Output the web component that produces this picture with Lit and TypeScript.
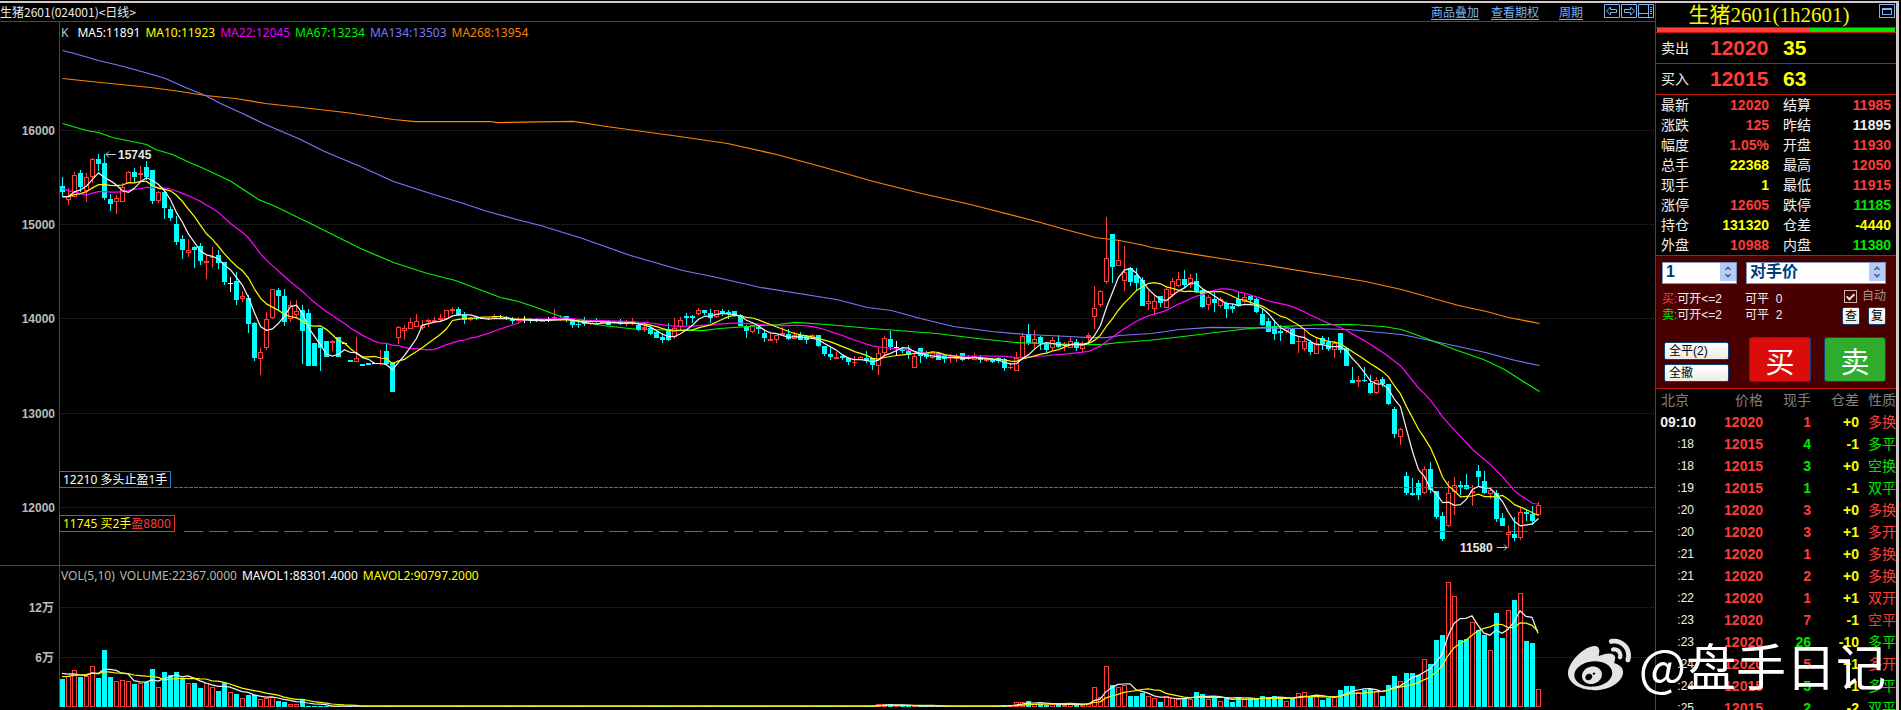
import { LitElement, html, svg, css } from "lit";
import { customElement } from "lit/decorators.js";
import { classMap } from "lit/directives/class-map.js";

// One candle per entry: direction (c = down, r = up, w = flat), high, body top, body bottom, low.
// Levels are canvas rows of the daily chart.
const CANDLES = `
c177,186,192,197 r188,196,200,205 r172,175,197,197 c170,173,187,192 r173,177,191,202 r158,159,177,183
c154,159,164,171 c154,163,198,200 c194,199,204,211 r195,198,202,214 r183,187,202,202 r171,172,183,183
c168,172,177,183 r166,173,175,182 c161,167,177,180 c170,170,201,204 r191,192,201,203 c191,192,208,219
c206,209,218,221 c216,224,242,245 c235,239,250,259 r239,250,253,257 c246,247,250,268 c243,246,261,265
r255,261,263,279 r247,257,258,268 c250,255,263,269 c262,262,282,285 w277,283,284,292 c272,281,300,305
r291,296,299,302 c295,298,324,333 c322,323,358,361 r348,352,359,375 r312,319,348,350 r289,289,318,319
c288,290,296,310 c289,296,322,326 r301,305,319,322 r300,311,315,317 c305,310,331,364 c309,313,366,366
c343,343,366,366 c328,328,348,371 c341,341,357,357 r340,341,343,351 c337,337,357,357 w343,343,343,343
c360,360,362,362 r337,358,362,362 c364,364,366,366 c363,363,365,365 w363,363,363,363 r350,363,364,365
c343,351,364,364 c362,362,392,392 r326,327,338,344 r325,328,331,340 r318,322,329,329 r314,321,327,327
r320,325,328,330 r319,320,322,327 r317,320,322,323 r314,318,320,321 r310,310,319,320 r307,309,311,314
c307,309,315,316 c312,315,320,324 r317,318,320,321 c317,318,319,320 w318,318,319,319 r317,318,319,320
r314,317,319,319 w315,318,318,319 c316,317,319,320 c317,319,321,324 r317,320,321,322 w316,319,319,323
c318,319,320,323 c318,319,321,322 r319,320,322,322 w317,319,320,322 r309,317,319,320 r315,318,319,321
c316,316,319,322 c319,319,325,328 c320,324,325,328 c317,320,324,326 r320,321,324,325 c318,320,322,323
r320,321,323,324 c320,321,325,325 r321,321,323,324 c319,321,324,325 r320,321,323,326 r318,321,323,325
c322,325,330,331 r325,327,329,332 c325,328,334,335 c330,332,338,338 c333,337,340,343 c323,329,340,341
r318,328,337,339 r317,320,327,331 c313,316,318,325 c315,316,318,323 r308,310,314,315 c310,310,313,315
c309,313,318,323 r310,310,317,318 c309,311,313,316 c310,312,314,319 c311,311,315,317 c314,315,326,326
c325,326,331,338 r325,325,332,333 c325,327,329,334 c329,333,338,342 r333,339,341,341 r335,335,340,343
r327,333,335,336 c329,334,339,340 r332,335,339,339 c332,335,340,340 c335,336,340,344 r334,335,338,339
c335,335,346,347 c346,346,354,356 c348,354,357,360 r352,357,359,359 c354,356,358,360 c357,358,362,365
r356,362,363,366 r356,357,360,360 c351,358,361,363 c358,358,365,370 r347,353,366,375 r336,338,353,357
c331,339,347,350 w341,347,348,355 c347,349,351,353 c345,351,355,359 r352,356,368,368 c348,348,356,363
c351,353,357,359 r351,353,358,359 c353,353,360,360 c354,355,359,363 r354,356,358,363 r354,356,359,362
c353,353,360,361 r355,357,359,360 r353,356,360,360 c355,357,360,363 r358,359,361,362 c358,360,362,363
c357,358,361,363 c358,359,368,371 r363,367,368,369 r352,358,371,371 r333,336,358,358 c324,334,343,345
r330,339,343,349 c336,337,343,350 c343,343,350,353 r337,340,348,351 c335,342,347,348 r342,344,345,351
r337,341,348,348 c339,342,348,351 r341,343,349,352 r333,335,337,343 r286,308,317,329 r290,291,305,307
r217,258,282,284 c234,234,267,283 r240,260,266,266 r246,272,281,291 c267,268,282,286 c268,275,283,290
c277,280,306,306 r291,301,304,310 r295,301,309,315 c296,296,303,307 r286,289,308,308 r278,281,295,297
r272,279,286,287 c270,279,285,288 r274,278,285,288 c273,281,292,293 c289,290,307,308 r295,297,305,310
c293,299,303,312 r297,299,306,308 c302,303,309,318 c304,306,309,313 c292,299,306,307 r294,297,302,303
c295,296,300,305 c298,299,312,313 c309,314,325,326 c318,321,332,332 c320,326,334,340 c325,331,333,341
r326,327,331,333 c328,329,344,344 r336,341,342,353 r330,341,349,351 c340,342,352,355 r337,343,354,354
c336,338,344,350 c337,342,349,351 r341,343,350,358 c333,333,350,353 c347,348,366,366 c367,380,383,383
r376,380,382,387 c367,380,381,382 c375,383,393,394 r377,380,393,394 c377,379,384,387 c384,384,404,405
c407,409,434,438 r428,429,437,445 c472,476,493,495 c478,493,495,496 c480,483,495,500 r466,469,493,494
c462,469,490,493 c491,491,517,519 c512,516,539,541 r481,493,526,527 r477,485,492,515 c481,485,487,495
c474,485,489,490 r485,491,493,506 c465,471,477,486 c471,481,493,494 r487,490,494,499 c490,493,519,522
c513,518,526,526 r525,532,535,548 c517,534,538,541 r507,512,538,540 c509,512,514,521 c506,514,521,525
r502,505,515,515`
  .trim()
  .split(/\s+/)
  .map((s) => {
    const [high, top, bottom, low] = s.slice(1).split(",").map(Number);
    return { kind: s[0], high, top, bottom, low, close: s[0] === "c" ? bottom : top };
  });

// Volume per candle, 50 units to 60,000 lots.
const VOLUMES: number[] = [
  28, 31, 37, 30, 31, 41, 29, 57, 30, 26, 27, 26, 23, 24, 25, 38, 20, 35, 32, 35, 29, 24, 24, 19, 24, 20, 16, 24, 15,
  13, 9, 12, 12, 8, 9, 10, 6, 5, 3, 3, 8,
  ...new Array(95).fill(1),
  3, 3, 3, 1, 1, 1, 1, 1, 1, 1, 1, 1, 1, 1, 1, 1, 1, 1, 1, 1, 1, 2, 1,
  5, 5, 6, 3, 3, 2, 3, 3, 2, 3, 3, 2, 4, 20, 10, 41, 22, 20, 22, 11, 11, 14, 11, 9, 5, 11, 9, 8, 9, 8, 15, 13,
  8, 10, 6, 9, 5, 10, 8, 8, 8, 11, 10, 11, 9, 6, 9, 14, 15, 10, 11, 7, 9, 11, 17, 21, 21, 15, 17, 18, 16, 11, 22, 31,
  26, 34, 34, 32, 48, 43, 67, 72, 125, 111, 67, 68, 85, 77, 72, 57, 94, 69, 97, 107, 114, 66, 64, 18,
];

// Closes and volumes of the sessions before the first visible one.
const PRIOR_CLOSES = [150, 150, 150, 150, ...new Array(17).fill(197)];
const PRIOR_VOLUMES = [27, 27, 27, 27, 27, 35, 35, 35, 35];

const MA67 =
  "62,123 86,130 98,132 112,137 146,144 155,149 172,154 189,162 201,167 229,180 258,199 275,206 312,224 360,248 393,262 427,273 455,280 500,297 518,301 536,307 560,316 574,320 602,325 638,329 702,330 719,328 778,324 795,322 826,324 871,328 936,333 977,338 1015,342 1077,344 1101,344 1119,342 1147,340 1165,338 1183,336 1215,332 1240,329 1261,327 1322,324 1351,324 1383,326 1401,329 1426,338 1454,349 1483,359 1504,369 1526,383 1539,391";
const MA134 =
  "62,50 74,53 98,60 123,66 148,73 165,78 185,87 205,95 220,103 242,113 265,124 300,139 324,151 360,166 393,181 430,193 460,202 487,211 520,220 540,225 582,238 630,255 682,270 712,276 760,287 836,299 867,307 891,310 920,318 953,326 991,331 1026,334 1069,336 1088,337 1106,337 1119,335 1151,333 1179,329 1211,327 1311,328 1347,329 1401,334 1444,343 1485,352 1515,360 1539,365";
const MA268 =
  "62,78 100,82 150,87 180,91 205,95 235,98 265,103 310,108 345,112 393,119 415,121 490,121 497,122 573,121 606,126 679,136 727,143 776,154 824,167 873,181 921,193 970,204 1040,222 1061,228 1095,237 1119,240 1144,245 1151,247 1233,260 1261,264 1329,275 1365,281 1401,289 1426,296 1458,305 1486,311 1508,317 1539,323";

const PANE_TOP = 22;
const VOLUME_BASE = 141;
const xOf = (i: number) => 62 + 6 * i;

function movingAverage(values: number[], prior: number[], span: number): number[] {
  const all = [...prior, ...values];
  return values.map((_, i) => {
    const end = prior.length + i + 1;
    const part = all.slice(Math.max(0, end - span), end);
    return part.reduce((a, b) => a + b, 0) / part.length;
  });
}

const closes = CANDLES.map((c) => c.close);
const toPoints = (ys: number[]) => ys.map((y, i) => `${xOf(i)},${y.toFixed(1)}`).join(" ");

@customElement("price-chart")
class PriceChart extends LitElement {
  static styles = css`
    :host { display: block; position: relative; height: 543px; overflow: hidden; border-bottom: 1px solid #c01808; }
    svg { display: block; width: 100%; height: 100%; }
    .sharp { shape-rendering: crispEdges; }
    .axis { stroke: #c01808; }
    .grid { stroke: #a00000; stroke-dasharray: 1 1; }
    .stop { stroke: #1482c0; stroke-dasharray: 4 1; }
    .entry { stroke: #f03018; stroke-dasharray: 19 6; }
    .tick { font: bold 12px "Liberation Sans", Arial, sans-serif; fill: #b8bcbc; text-anchor: end; }
    .mark { font: bold 12px "Liberation Sans", Arial, sans-serif; fill: #e8e8e8; }
    .arrow { stroke: #c8c8c8; fill: none; }
    .c { fill: #00ffff; } .r { fill: #ff3c38; } .w { fill: #ffffff; } .hole { fill: #000; }
    .line { fill: none; stroke-width: 1.25; }
    .ma5 { stroke: #f0f0f0; color: #fff; } .ma10 { stroke: #f8f800; color: #ffff00; }
    .ma22 { stroke: #ff00ff; color: #f000f0; } .ma67 { stroke: #00f400; color: #00f000; }
    .ma134 { stroke: #7878fc; color: #7878f8; } .ma268 { stroke: #ff8400; color: #f88000; }
    .legend, .order { font: 12px/15px "Noto Sans", "Noto Sans CJK SC", sans-serif; white-space: pre; }
    .legend { position: absolute; left: 61px; top: 3px; display: flex; gap: 5px; color: #c8c8c8; }
    .legend .k { margin-right: 4px; }
    .legend span { stroke: none; }
    .order { position: absolute; left: 59px; padding: 0 3px; background: #000; border: 1px solid; }
    .order span { color: #fff; }
    .stop-tag { top: 449px; border-color: #1482c0; }
    .entry-tag { top: 493px; border-color: #f03018; }
    .order .y { color: #ffff00; } .order .p { color: #ff3c38; }
  `;

  private candle(c: (typeof CANDLES)[number], i: number) {
    const x = xOf(i);
    const top = c.top - PANE_TOP;
    const h = Math.max(1, c.bottom - c.top);
    const hollow = c.kind === "r" && h > 2;
    return svg`<g class=${c.kind}>
      <rect x=${x} y=${c.high - PANE_TOP} width="1" height=${Math.max(1, c.low - c.high)}></rect>
      <rect x=${x - 2} y=${top} width="5" height=${h}></rect>
      ${hollow ? svg`<rect class="hole" x=${x - 1} y=${top + 1} width="3" height=${h - 2}></rect>` : null}
    </g>`;
  }

  render() {
    const levels: [number, number][] = [[16000, 108], [15000, 202], [14000, 296], [13000, 391], [12000, 485]];
    return html`
      <svg role="img" aria-label="生猪2601 日线">
        <g class="sharp">
          ${levels.map(([, y]) => svg`<line class="grid" x1="61" x2="100%" y1=${y + 0.5} y2=${y + 0.5}></line>`)}
          <line class="axis" x1="59.5" x2="59.5" y1="0" y2="100%"></line>
        </g>
        ${levels.map(([v, y]) => svg`<text class="tick" x="55" y=${y + 5}>${v}</text>`)}
        <g class="sharp">
          ${CANDLES.map((c, i) => this.candle(c, i))}
          <line class="stop" x1="174" x2="100%" y1="465.5" y2="465.5"></line>
          <line class="entry" x1="184" x2="100%" y1="509.5" y2="509.5"></line>
        </g>
        <g transform="translate(0.5,-21.5)">
          <polyline class="line ma268" points=${MA268}></polyline>
          <polyline class="line ma134" points=${MA134}></polyline>
          <polyline class="line ma67" points=${MA67}></polyline>
          <polyline class="line ma22" points=${toPoints(movingAverage(closes, PRIOR_CLOSES, 22))}></polyline>
          <polyline class="line ma10" points=${toPoints(movingAverage(closes, PRIOR_CLOSES, 10))}></polyline>
          <polyline class="line ma5" points=${toPoints(movingAverage(closes, PRIOR_CLOSES, 5))}></polyline>
        </g>
        <path class="arrow" d="M116 132.5H106M109 129.5L106 132.5L109 135.5"></path>
        <text class="mark" x="118" y="137">15745</text>
        <text class="mark" x="1460" y="530">11580</text>
        <path class="arrow" d="M1497 525.5H1507M1504 522.5L1507 525.5L1504 528.5"></path>
      </svg>
      <div class="legend">
        <span class="k">K</span><span class="ma5">MA5:11891</span><span class="ma10">MA10:11923</span
        ><span class="ma22">MA22:12045</span><span class="ma67">MA67:13234</span
        ><span class="ma134">MA134:13503</span><span class="ma268">MA268:13954</span>
      </div>
      <div class="order stop-tag"><span>12210 多头止盈1手</span></div>
      <div class="order entry-tag"><span class="y">11745 买2手</span><span class="p">盈8800</span></div>
    `;
  }
}

@customElement("volume-chart")
class VolumeChart extends LitElement {
  static styles = css`
    :host { display: block; position: relative; height: 141px; overflow: hidden; }
    svg { display: block; width: 100%; height: 100%; }
    .sharp { shape-rendering: crispEdges; }
    .axis { stroke: #c01808; }
    .grid { stroke: #a00000; stroke-dasharray: 1 1; }
    .tick { font: bold 12px "Liberation Sans", "Noto Sans CJK SC", sans-serif; fill: #b8bcbc; text-anchor: end; }
    .c { fill: #00ffff; } .r { fill: #ff3c38; } .hole { fill: #000; }
    .line { fill: none; stroke-width: 1.25; }
    .m5 { stroke: #f0f0f0; color: #fff; } .m10 { stroke: #f8f800; color: #ffff00; }
    .legend {
      position: absolute; left: 61px; top: 2px; display: flex; gap: 5px; color: #b8b8b8; white-space: pre;
      font: 12px/15px "Noto Sans", sans-serif;
    }
  `;

  private bar(h: number, i: number) {
    const x = xOf(i) - 2;
    const up = CANDLES[i].kind !== "c";
    const y = VOLUME_BASE - h;
    return svg`<g class=${up ? "r" : "c"}>
      <rect x=${x} y=${y} width="5" height=${h}></rect>
      ${up && h > 2 ? svg`<rect class="hole" x=${x + 1} y=${y + 1} width="3" height=${h - 2}></rect>` : null}
    </g>`;
  }

  render() {
    const rows: [string, number][] = [["12万", 41], ["6万", 91]];
    const line = (prior: number[], span: number) =>
      toPoints(movingAverage(VOLUMES, prior, span).map((v) => VOLUME_BASE - v));
    return html`
      <svg role="img" aria-label="成交量">
        <g class="sharp">
          ${rows.map(([, y]) => svg`<line class="grid" x1="61" x2="100%" y1=${y + 0.5} y2=${y + 0.5}></line>`)}
          <line class="axis" x1="59.5" x2="59.5" y1="0" y2="100%"></line>
          ${VOLUMES.map((h, i) => this.bar(h, i))}
        </g>
        ${rows.map(([t, y]) => svg`<text class="tick" x="54" y=${y + 5}>${t}</text>`)}
        <polyline class="line m5" points=${line(PRIOR_VOLUMES, 5)}></polyline>
        <polyline class="line m10" points=${line(PRIOR_VOLUMES, 10)}></polyline>
      </svg>
      <div class="legend">
        <span>VOL(5,10)</span><span>VOLUME:22367.0000</span><span class="m5">MAVOL1:88301.4000</span
        ><span class="m10">MAVOL2:90797.2000</span>
      </div>
    `;
  }
}

type Tone = "red" | "green" | "yellow" | "white";

const QUOTES: [string, string, Tone, string, string, Tone][] = [
  ["最新", "12020", "red", "结算", "11985", "red"],
  ["涨跌", "125", "red", "昨结", "11895", "white"],
  ["幅度", "1.05%", "red", "开盘", "11930", "red"],
  ["总手", "22368", "yellow", "最高", "12050", "red"],
  ["现手", "1", "yellow", "最低", "11915", "red"],
  ["涨停", "12605", "red", "跌停", "11185", "green"],
  ["持仓", "131320", "yellow", "仓差", "-4440", "yellow"],
  ["外盘", "10988", "red", "内盘", "11380", "green"],
];

const TICKS: [string, string, string, string, string, Tone][] = [
  ["09:10", "12020", "1", "+0", "多换", "red"],
  [":18", "12015", "4", "-1", "多平", "green"],
  [":18", "12015", "3", "+0", "空换", "green"],
  [":19", "12015", "1", "-1", "双平", "green"],
  [":20", "12020", "3", "+0", "多换", "red"],
  [":20", "12020", "3", "+1", "多开", "red"],
  [":21", "12020", "1", "+0", "多换", "red"],
  [":21", "12020", "2", "+0", "多换", "red"],
  [":22", "12020", "1", "+1", "双开", "red"],
  [":23", "12020", "7", "-1", "空平", "red"],
  [":23", "12020", "26", "-10", "多平", "green"],
  [":24", "12020", "5", "+1", "多开", "red"],
  [":24", "12015", "5", "-1", "多平", "green"],
  [":25", "12015", "2", "-2", "双平", "green"],
];

const arrows = html`<svg class="arrows" viewBox="0 0 16 18" aria-hidden="true">
  <path d="M8 3L11.500 7H9.500L8 5.500L6.500 7H4.500ZM8 15L4.500 11H6.500L8 12.500L9.500 11H11.500Z"></path>
</svg>`;

@customElement("quote-panel")
class QuotePanel extends LitElement {
  static styles = css`
    :host { display: block; color: #f0f0f0; font: 14px/20px "Liberation Sans", "Noto Sans CJK SC", sans-serif; }
    button, input, select { font: inherit; margin: 0; box-sizing: border-box; border-radius: 0; }
    .red { color: #ff3c38; } .green { color: #00e800; } .yellow { color: #ffff00; } .white { color: #f0f0f0; }
    .title { display: flex; height: 24px; border-bottom: 1px solid #c01808; }
    .title h1 { flex: 1; margin: 0; padding-left: 4px; text-align: center; color: #f8f800; font: 21px/24px "Liberation Serif", "Noto Sans CJK SC", serif; }
    .icon { width: 16px; height: 14px; margin: 1px; padding: 0; border: 1px solid #78b4f4; background: none; display: grid; place-items: center; }
    .icon i { width: 8px; height: 4px; border: 1px solid #78b4f4; border-top-width: 2px; }
    .ratio { display: flex; height: 4px; padding: 0 1px; border-bottom: 1px solid #c01808; }
    .ratio .bid { flex: 9; background: #ff3c38; } .ratio .ask { flex: 5; background: #00e800; }
    .level { display: grid; grid-template-columns: 49px 73px 1fr; align-items: center; height: 30px; padding-left: 5px; border-bottom: 1px solid #c01808; }
    .level b { font-size: 21px; }
    .quotes { border-collapse: collapse; width: 100%; table-layout: fixed; }
    th, td { padding: 0; font-weight: normal; text-align: right; overflow: hidden; white-space: nowrap; }
    .quotes th { text-align: left; padding-left: 5px; }
    .quotes tr { height: 20px; }
    .quotes td { font-weight: bold; }
    .quotes td:last-child { padding-right: 5px; } .quotes th:nth-child(3) { padding-left: 14px; }
    .trade { background: #480000; border: solid #c01808; border-width: 1px 0; padding: 6px 10px 6px 6px; font-size: 12px; line-height: 16px; }
    .fields { display: grid; grid-template-columns: 75px 140px; justify-content: space-between; }
    .field { position: relative; display: block; height: 20px; border: 1px solid #7898c0; background: #fff; }
    .field input, .field select { display: block; width: 100%; height: 18px; padding: 0 3px; border: 0; outline: 0; background: none; appearance: none; color: #003c78; font: bold 16px/18px "Liberation Sans", "Noto Sans CJK SC", sans-serif; }
    .arrows { position: absolute; top: 0; right: 0; width: 16px; height: 18px; background: #b4ccf8; fill: #506078; pointer-events: none; }
    .options { display: grid; grid-template-columns: 83px 1fr auto; margin-top: 5px; }
    .options .sum { padding-top: 2px; white-space: pre; }
    .side { display: flex; flex-direction: column; align-items: flex-end; gap: 4px; }
    .auto { display: flex; align-items: center; gap: 5px; height: 14px; color: #a89888; }
    .auto input { appearance: none; width: 13px; height: 13px; border: 1px solid #c8b8a8; display: grid; place-items: center; }
    .auto input:checked::after { content: ""; width: 3px; height: 6px; border: solid #e8e0d8; border-width: 0 2px 2px 0; transform: rotate(45deg); }
    .small { display: flex; gap: 8px; }
    .plain { padding: 0; border: 1px solid #104078; border-radius: 2px; background: linear-gradient(#fff, #ecebe4); color: #000; font-size: 12px; line-height: 14px; }
    .small .plain { width: 18px; height: 18px; }
    .actions { display: grid; grid-template-columns: 1fr 62px 62px; column-gap: 13px; align-items: end; margin-top: 12px; padding-left: 2px; }
    .stack { display: grid; gap: 4px; width: 65px; }
    .stack .plain { height: 18px; text-align: left; padding-left: 4px; }
    .order { height: 45px; padding: 0; border: 1px solid #104078; border-radius: 3px; color: #fff; font: 29px/38px "Noto Sans CJK SC", sans-serif; }
    .buy { background: #dc0c0c; } .sell { background: #30ac2c; }
    .ticks { border-collapse: collapse; width: 100%; table-layout: fixed; }
    .ticks tr { height: 22px; }
    .ticks thead th { color: #808080; }
    .ticks th:first-child { text-align: left; padding-left: 5px; }
    .ticks td:first-child { font-size: 12px; padding-right: 6px; }
    .ticks td.full { font-size: 14px; font-weight: bold; padding-right: 4px; }
    .ticks td { font-weight: bold; } .ticks td:first-child:not(.full), .ticks td:last-child { font-weight: normal; }
  `;

  render() {
    return html`
      <header class="title">
        <h1>生猪2601(1h2601)</h1>
        <button class="icon" aria-label="窗口"><i></i></button>
      </header>
      <div class="ratio"><span class="bid"></span><span class="ask"></span></div>
      <div class="level"><span>卖出</span><b class="red">12020</b><b class="yellow">35</b></div>
      <div class="level"><span>买入</span><b class="red">12015</b><b class="yellow">63</b></div>
      <table class="quotes">
        <colgroup><col width="43" /><col width="70" /><col width="56" /><col /></colgroup>
        <tbody>
          ${QUOTES.map(
            ([a, av, at, b, bv, bt]) => html`<tr>
              <th scope="row">${a}</th><td class=${at}>${av}</td>
              <th scope="row">${b}</th><td class=${bt}>${bv}</td>
            </tr>`,
          )}
        </tbody>
      </table>
      <section class="trade">
        <div class="fields">
          <label class="field"><input type="text" inputmode="numeric" aria-label="手数" value="1" />${arrows}</label>
          <label class="field"><select aria-label="价格方式"><option>对手价</option></select>${arrows}</label>
        </div>
        <div class="options">
          <div class="sum"><div><span class="red">买:</span>可开&lt;=2</div><div><span class="green">卖:</span>可开&lt;=2</div></div>
          <div class="sum"><div>可平  0</div><div>可平  2</div></div>
          <div class="side">
            <label class="auto"><input type="checkbox" checked />自动</label>
            <div class="small"><button class="plain">查</button><button class="plain">复</button></div>
          </div>
        </div>
        <div class="actions">
          <div class="stack"><button class="plain">全平(2)</button><button class="plain">全撤</button></div>
          <button class="order buy">买</button>
          <button class="order sell">卖</button>
        </div>
      </section>
      <table class="ticks">
        <colgroup><col width="44" /><col width="63" /><col width="48" /><col width="48" /><col /></colgroup>
        <thead>
          <tr><th>北京</th><th>价格</th><th>现手</th><th>仓差</th><th>性质</th></tr>
        </thead>
        <tbody>
          ${TICKS.map(
            ([time, price, lots, diff, kind, tone]) => html`<tr>
              <td class=${classMap({ full: time.length > 3 })}>${time}</td>
              <td class="red">${price}</td>
              <td class=${tone}>${lots}</td>
              <td class="yellow">${diff}</td>
              <td class=${tone}>${kind}</td>
            </tr>`,
          )}
        </tbody>
      </table>
    `;
  }
}

@customElement("app-root")
class AppRoot extends LitElement {
  static styles = css`
    :host { display: block; position: relative; height: 100vh; box-sizing: border-box; overflow: hidden; background: #000; padding-top: 1px; }
    .frame { display: grid; grid-template-columns: minmax(0, 1fr) 241px; height: 100%; margin-right: 2px; border-top: 2px solid #d4c8c8; border-right: 3px solid #d4c8c8; box-sizing: border-box; }
    .bar { display: flex; align-items: center; height: 19px; box-sizing: border-box; border-bottom: 1px solid #c01808; color: #e8e8e8; font: 12px/14px "Noto Sans CJK SC", sans-serif; }
    .bar h2 { flex: 1; margin: 0; font: inherit; }
    .links { display: flex; align-items: center; }
    .links a { color: #78b4f4; margin-right: 12px; text-underline-offset: 2px; }
    .links a + a + a { margin: 0 21px 0 8px; }
    .tool { width: 16px; height: 14px; padding: 0; margin: 0 1px 2px 0; border: 0; background: none; }
    .tool svg { display: block; fill: none; stroke: #78b4f4; }
    .side { border-left: 1px solid #c01808; min-width: 0; overflow: hidden; }
    .mark { position: absolute; right: 15px; bottom: 10px; display: flex; align-items: center; gap: 8px; color: #fff; font: 50px/72px "Noto Sans CJK SC", sans-serif; pointer-events: none; }
    .mark svg { width: 63px; height: 53px; fill: #e4e4e4; }
  `;

  render() {
    return html`
      <div class="frame">
        <main>
          <div class="bar">
            <h2>生猪2601(024001)&lt;日线&gt;</h2>
            <nav class="links">
              <a href="#overlay">商品叠加</a>
              <a href="#options">查看期权</a>
              <a href="#period">周期</a>
              <button class="tool" aria-label="后退">
                <svg width="16" height="14"><path d="M.5.5h15v13h-15zM2.500 7L6.500 3v2.500h6v3h-6v2.500z"></path></svg>
              </button>
              <button class="tool" aria-label="前进">
                <svg width="16" height="14"><path d="M.5.5h15v13h-15zM13.500 7L9.500 3v2.500h-6v3h6v2.500z"></path></svg>
              </button>
              <button class="tool" aria-label="布局">
                <svg width="16" height="14"><path d="M.5.5h15v13h-15zM10.500.5v13M.5 9.500h10M12 3.500h2M12 5.500h2M12 7.500h2M12 9.500h2"></path></svg>
              </button>
            </nav>
          </div>
          <price-chart></price-chart>
          <volume-chart></volume-chart>
        </main>
        <aside class="side"><quote-panel></quote-panel></aside>
      </div>
      <div class="mark">
        <svg viewBox="0 2 24 20" preserveAspectRatio="none" aria-hidden="true">
          <path d="M10.098 20.323c-3.977.391-7.414-1.406-7.672-4.02-.259-2.609 2.759-5.047 6.74-5.441 3.979-.394 7.413 1.404 7.671 4.018.259 2.6-2.759 5.049-6.737 5.439l-.002.004zM9.05 17.219c-.384.616-1.208.884-1.829.602-.612-.279-.793-.991-.406-1.593.379-.595 1.176-.861 1.793-.601.622.263.82.972.442 1.592zm1.27-1.627c-.141.237-.449.353-.689.253-.236-.09-.313-.361-.177-.586.138-.227.436-.346.672-.24.239.09.315.36.18.601l.014-.028zm.176-2.719c-1.893-.493-4.033.45-4.857 2.118-.836 1.704-.026 3.591 1.886 4.21 1.983.64 4.318-.341 5.132-2.179.8-1.793-.201-3.642-2.161-4.149zm7.563-1.224c-.346-.105-.57-.18-.405-.615.375-.977.42-1.804 0-2.404-.781-1.112-2.915-1.053-5.364-.03 0 0-.766.331-.571-.271.376-1.217.315-2.224-.27-2.809-1.338-1.337-4.869.045-7.888 3.08C1.309 10.87 0 13.273 0 15.348c0 3.981 5.099 6.395 10.086 6.395 6.536 0 10.888-3.801 10.888-6.82 0-1.822-1.547-2.854-2.915-3.284v.01zm1.908-5.092c-.766-.856-1.908-1.187-2.96-.962-.436.09-.706.511-.616.932.09.42.511.691.932.602.511-.105 1.067.044 1.442.465.376.421.466.977.316 1.473-.136.406.089.856.51.992.405.119.857-.105.992-.512.33-1.021.12-2.178-.646-3.035l.03.045zm2.418-2.195c-1.576-1.757-3.905-2.419-6.054-1.968-.496.104-.812.587-.706 1.081.104.496.586.813 1.082.707 1.532-.331 3.185.15 4.296 1.383 1.112 1.246 1.429 2.943.947 4.416-.165.48.106 1.007.586 1.157.479.165.991-.104 1.157-.586.675-2.088.241-4.478-1.338-6.235l.03.045z"></path>
        </svg>
        <span>@盘手日记</span>
      </div>
    `;
  }
}
